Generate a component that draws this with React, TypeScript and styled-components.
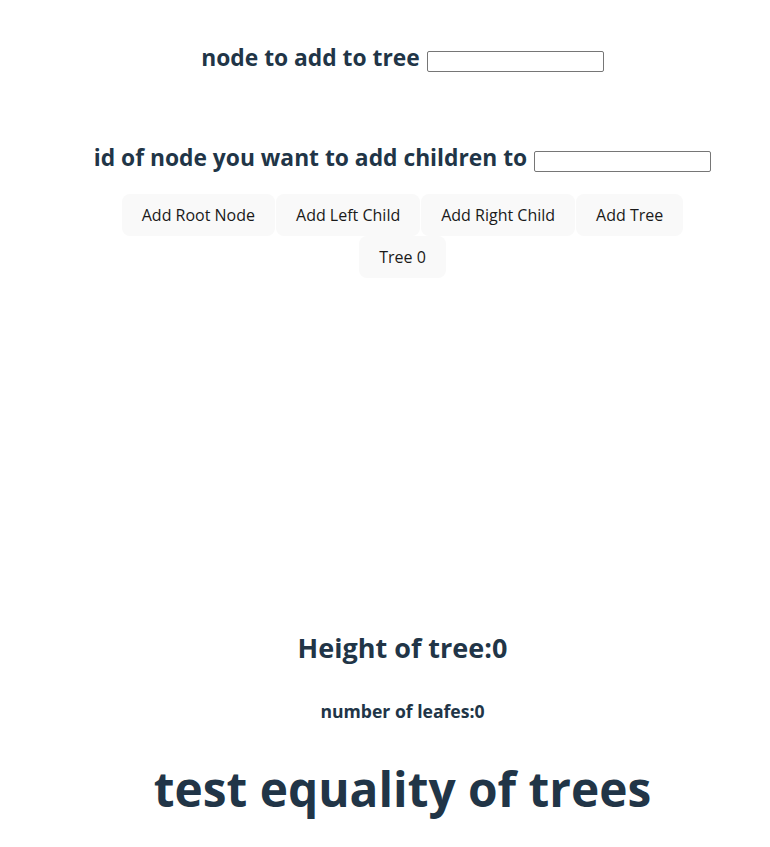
import React, { useState } from "react"
import styled, { createGlobalStyle } from "styled-components"

const GlobalStyle = createGlobalStyle`
    body {
        margin: 0;
        background: #ffffff;
        color: #213547;
        font-family: "Open Sans", "Noto Sans", sans-serif;
    }
`;

const Page = styled.div`
    display: flex;
    flex-direction: column;
    align-items: center;
    padding-left: 35px;
    padding-top: 44px;
    text-align: center;
`;

const FieldRow = styled.div<{ $gap: number }>`
    display: flex;
    align-items: center;
    gap: 7px;
    margin-bottom: ${p => p.$gap}px;
`;

const FieldLabel = styled.label`
    font-size: 22.8px;
    font-weight: 700;
    line-height: 28px;
`;

const TextInput = styled.input`
    width: 177px;
    height: 21px;
    box-sizing: border-box;
    border: 1px solid #767676;
    border-radius: 2px;
    padding: 1px 2px;
    font-size: 13px;
    margin-top: 7px;
`;

const ButtonRow = styled.div`
    display: flex;
    justify-content: center;
    gap: 1px;
`;

const Button = styled.button`
    height: 42px;
    padding: 0 19px;
    border: 1px solid transparent;
    border-radius: 8px;
    background: #f9f9f9;
    color: #1a1a1a;
    font-family: inherit;
    font-size: 16px;
    font-weight: 500;
    cursor: pointer;
    &:hover {
        border-color: #646cff;
    }
`;

const TreeCanvas = styled.div`
    height: 351px;
`;

const Stat = styled.h2<{ $size: number }>`
    margin: 0;
    font-size: ${p => p.$size}px;
    font-weight: 700;
`;

const Title = styled.h1`
    margin: 0;
    font-size: 47.8px;
    font-weight: 700;
    line-height: 60px;
`;

export default function App() {
    const [value, setValue] = useState("")
    const [parentId, setParentId] = useState("")
    const [trees] = useState(["Tree 0"])

    return (
        <>
            <GlobalStyle />
            <Page>
                <FieldRow $gap={72}>
                    <FieldLabel>node to add to tree</FieldLabel>
                    <TextInput value={value} onChange={e => setValue(e.target.value)} />
                </FieldRow>
                <FieldRow $gap={22}>
                    <FieldLabel>id of node you want to add children to</FieldLabel>
                    <TextInput value={parentId} onChange={e => setParentId(e.target.value)} />
                </FieldRow>
                <ButtonRow>
                    <Button>Add Root Node</Button>
                    <Button>Add Left Child</Button>
                    <Button>Add Right Child</Button>
                    <Button>Add Tree</Button>
                </ButtonRow>
                <ButtonRow>
                    {trees.map(t => <Button key={t}>{t}</Button>)}
                </ButtonRow>
                <TreeCanvas />
                <Stat $size={27}>Height of tree:0</Stat>
                <Stat $size={17.6} style={{ marginTop: 33 }}>number of leafes:0</Stat>
                <Title style={{ marginTop: 36 }}>test equality of trees</Title>
            </Page>
        </>
    )
}
